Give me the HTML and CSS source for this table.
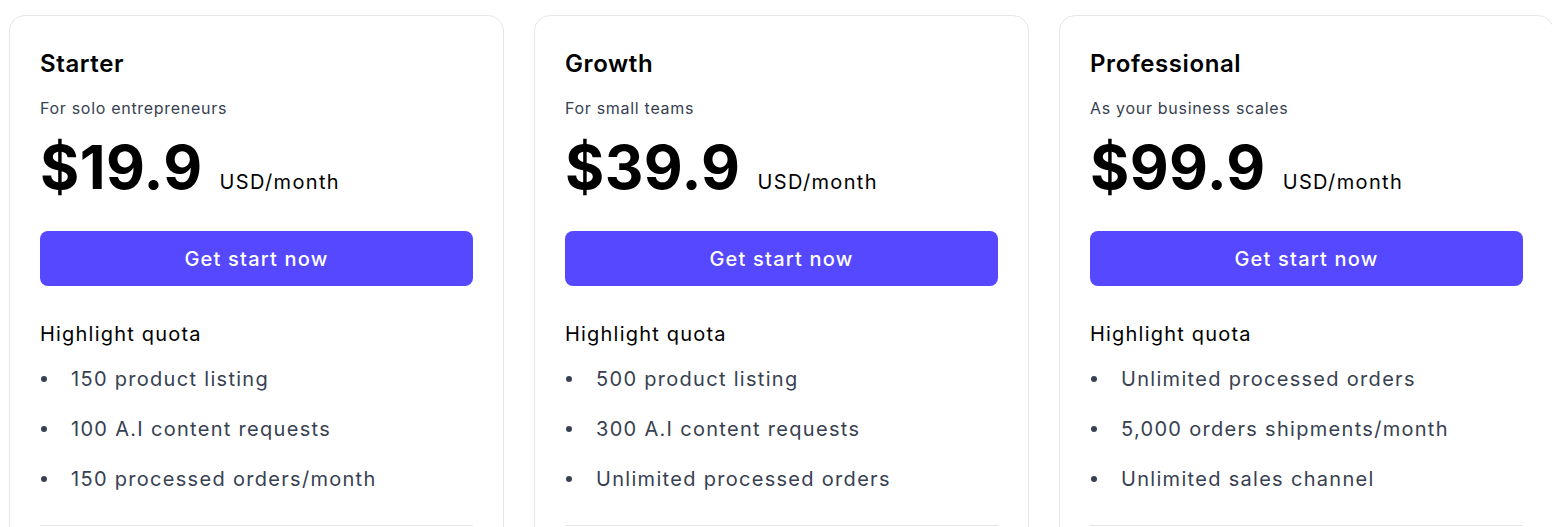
FILE: index.html
```html
<!DOCTYPE html>
<html lang="en">
<head>
<meta charset="utf-8">
<title>Pricing</title>
<link rel="stylesheet" href="styles.css">
</head>
<body>
<main class="plans">
  <section class="card">
    <h2 class="title">Starter</h2>
    <p class="subtitle">For solo entrepreneurs</p>
    <div class="price"><span class="amount">$19.9</span><span class="unit">USD/month</span></div>
    <button class="cta">Get start now</button>
    <h3 class="quota">Highlight quota</h3>
    <ul class="features">
      <li>150 product listing</li>
      <li>100 A.I content requests</li>
      <li>150 processed orders/month</li>
    </ul>
    <hr class="divider">
  </section>
  <section class="card">
    <h2 class="title">Growth</h2>
    <p class="subtitle">For small teams</p>
    <div class="price"><span class="amount">$39.9</span><span class="unit">USD/month</span></div>
    <button class="cta">Get start now</button>
    <h3 class="quota">Highlight quota</h3>
    <ul class="features">
      <li>500 product listing</li>
      <li>300 A.I content requests</li>
      <li>Unlimited processed orders</li>
    </ul>
    <hr class="divider">
  </section>
  <section class="card">
    <h2 class="title">Professional</h2>
    <p class="subtitle">As your business scales</p>
    <div class="price"><span class="amount">$99.9</span><span class="unit">USD/month</span></div>
    <button class="cta">Get start now</button>
    <h3 class="quota">Highlight quota</h3>
    <ul class="features">
      <li>Unlimited processed orders</li>
      <li>5,000 orders shipments/month</li>
      <li>Unlimited sales channel</li>
    </ul>
    <hr class="divider">
  </section>
</main>
</body>
</html>
```
FILE: styles.css
```css
* { box-sizing: border-box; }
html, body { margin: 0; padding: 0; background: #fff; }
body {
  font-family: Inter, "Liberation Sans", sans-serif;
  color: #000;
  overflow: hidden;
  height: 527px;
}
.plans {
  display: flex;
  gap: 30px;
  padding: 15px 0 0 9px;
  width: 1700px;
}
.card {
  flex: 0 0 495px;
  border: 1px solid #e7e7ea;
  border-radius: 16px;
  padding: 32px 30px 40px;
  display: flex;
  flex-direction: column;
}
.title {
  margin: 0;
  font-size: 24px;
  line-height: 32px;
  font-weight: 600;
  letter-spacing: 0.6px;
  color: #000;
}
.subtitle {
  margin: 16px 0 0;
  font-size: 16px;
  line-height: 24px;
  letter-spacing: 0.7px;
  color: #374151;
}
.price {
  margin-top: 17px;
  display: flex;
  align-items: baseline;
  gap: 17px;
}
.amount {
  font-size: 60px;
  line-height: 60px;
  font-weight: 700;
  letter-spacing: 0.4px;
}
.unit {
  font-size: 20px;
  line-height: 28px;
  letter-spacing: 1.35px;
  color: #000;
}
.cta {
  margin-top: 34px;
  height: 55px;
  border: 0;
  border-radius: 8px;
  background: #5548ff;
  color: #fff;
  font-family: inherit;
  font-size: 20px;
  font-weight: 500;
  letter-spacing: 1.2px;
  cursor: pointer;
}
.quota {
  margin: 34px 0 0;
  font-size: 20px;
  line-height: 28px;
  font-weight: 400;
  letter-spacing: 1.2px;
  color: #000;
}
.features {
  list-style: none;
  margin: 17px 0 0;
  padding: 0;
  display: flex;
  flex-direction: column;
  gap: 22px;
}
.features li {
  display: flex;
  align-items: center;
  font-size: 20px;
  line-height: 28px;
  letter-spacing: 1.3px;
  color: #374151;
}
.features li::before {
  content: "";
  width: 6px;
  height: 6px;
  border-radius: 50%;
  background: #374151;
  margin: 0 24px 0 1px;
  flex: none;
}
.divider {
  margin: 32px 0 0;
  border: 0;
  border-top: 1px solid #e5e7eb;
}
```
